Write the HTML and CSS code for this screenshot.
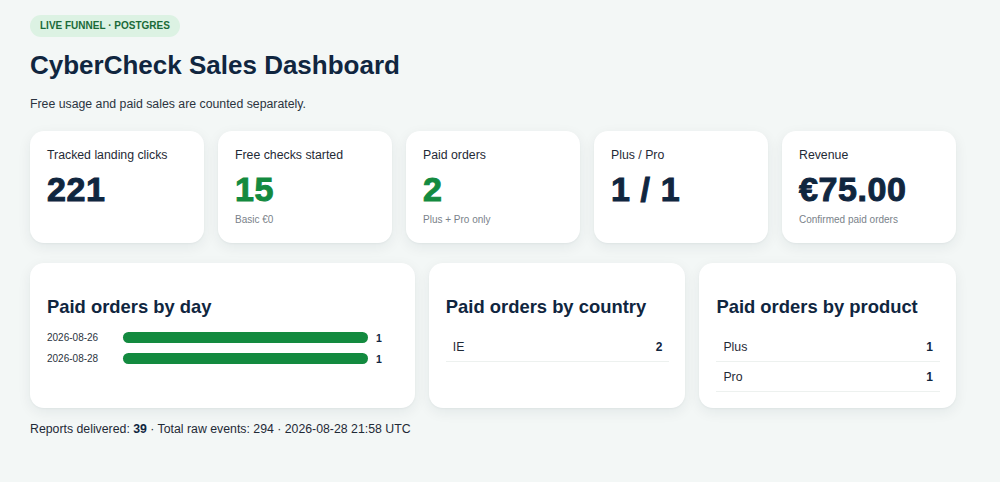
FILE: index.html
```html
<!DOCTYPE html>
<html lang="en">
<head>
<meta charset="utf-8">
<title>CyberCheck Sales Dashboard</title>
<link rel="stylesheet" href="styles.css">
</head>
<body>
<main class="page">
  <header class="head">
    <span class="badge">LIVE FUNNEL · POSTGRES</span>
    <h1 class="title">CyberCheck Sales Dashboard</h1>
    <p class="lead">Free usage and paid sales are counted separately.</p>
  </header>

  <section class="kpis">
    <div class="card kpi">
      <div class="kpi-label">Tracked landing clicks</div>
      <div class="kpi-value">221</div>
    </div>
    <div class="card kpi">
      <div class="kpi-label">Free checks started</div>
      <div class="kpi-value green">15</div>
      <div class="kpi-note">Basic €0</div>
    </div>
    <div class="card kpi">
      <div class="kpi-label">Paid orders</div>
      <div class="kpi-value green">2</div>
      <div class="kpi-note">Plus + Pro only</div>
    </div>
    <div class="card kpi">
      <div class="kpi-label">Plus / Pro</div>
      <div class="kpi-value">1 / 1</div>
    </div>
    <div class="card kpi">
      <div class="kpi-label">Revenue</div>
      <div class="kpi-value">€75.00</div>
      <div class="kpi-note">Confirmed paid orders</div>
    </div>
  </section>

  <section class="panels">
    <div class="card panel">
      <h2 class="panel-title">Paid orders by day</h2>
      <div class="bars">
        <div class="bar-row">
          <span class="bar-date">2026-08-26</span>
          <span class="bar-track"><span class="bar-fill" style="width:100%"></span></span>
          <span class="bar-val">1</span>
        </div>
        <div class="bar-row">
          <span class="bar-date">2026-08-28</span>
          <span class="bar-track"><span class="bar-fill" style="width:100%"></span></span>
          <span class="bar-val">1</span>
        </div>
      </div>
    </div>
    <div class="card panel">
      <h2 class="panel-title">Paid orders by country</h2>
      <div class="rows">
        <div class="row"><span>IE</span><b>2</b></div>
      </div>
    </div>
    <div class="card panel">
      <h2 class="panel-title">Paid orders by product</h2>
      <div class="rows">
        <div class="row"><span>Plus</span><b>1</b></div>
        <div class="row"><span>Pro</span><b>1</b></div>
      </div>
    </div>
  </section>

  <p class="foot">Reports delivered: <b>39</b> · Total raw events: 294 · 2026-08-28 21:58 UTC</p>
</main>
</body>
</html>
```

FILE: styles.css
```css
html, body {
  margin: 0;
  padding: 0;
}
body {
  background: #f3f7f6;
  font-family: "Liberation Sans", Arial, sans-serif;
  color: #14263a;
}
.page {
  width: 926px;
  padding: 15px 0 30px 30px;
  display: flex;
  flex-direction: column;
}
.head {
  display: flex;
  flex-direction: column;
  align-items: flex-start;
}
.badge {
  display: inline-block;
  background: #dcf2e3;
  color: #1a6a38;
  font-size: 10px;
  font-weight: 700;
  letter-spacing: 0;
  line-height: 12px;
  padding: 5px 10px;
  border-radius: 999px;
}
.title {
  margin: 13px 0 0;
  font-size: 26px;
  font-weight: 700;
  color: #10263f;
  line-height: 30px;
}
.lead {
  margin: 16px 0 0;
  font-size: 12.3px;
  color: #2b3440;
  line-height: 16px;
}
.card {
  background: #ffffff;
  border-radius: 14px;
  box-shadow: 0 4px 14px rgba(20, 40, 50, 0.07), 0 1px 2px rgba(20, 40, 50, 0.04);
  box-sizing: border-box;
}
.kpis {
  margin-top: 19px;
  display: grid;
  grid-template-columns: repeat(5, 1fr);
  gap: 14px;
}
.kpi {
  height: 112px;
  padding: 17px 17px 16px;
}
.kpi-label {
  font-size: 12.3px;
  color: #1f2a36;
  line-height: 15px;
}
.kpi-value {
  margin-top: 6px;
  font-size: 34px;
  font-weight: 700;
  letter-spacing: 0.6px;
  -webkit-text-stroke: 1px currentColor;
  color: #10263f;
  line-height: 40px;
}
.kpi-value.green {
  color: #138a3f;
}
.kpi-note {
  margin-top: 5px;
  font-size: 10px;
  color: #7a828a;
  line-height: 12px;
}
.panels {
  margin-top: 20px;
  display: grid;
  grid-template-columns: 1.5fr 1fr 1fr;
  gap: 14px;
}
.panel {
  min-height: 145px;
  padding: 33px 16px 16px 17px;
}
.panel-title {
  margin: 0;
  font-size: 18.4px;
  font-weight: 700;
  color: #10263f;
  line-height: 22px;
}
.bars {
  margin-top: 13px;
  display: flex;
  flex-direction: column;
  gap: 8px;
}
.bar-row {
  display: flex;
  align-items: center;
  height: 13px;
}
.bar-date {
  width: 76px;
  font-size: 10px;
  color: #2b3440;
}
.bar-track {
  width: 245px;
  height: 11px;
  border-radius: 6px;
  background: #e6ece9;
  display: flex;
}
.bar-fill {
  height: 11px;
  border-radius: 6px;
  background: #138a3f;
}
.bar-val {
  margin-left: 8px;
  font-size: 10.5px;
  font-weight: 700;
  color: #10263f;
}
.rows {
  margin-top: 14px;
  display: flex;
  flex-direction: column;
}
.row {
  display: flex;
  justify-content: space-between;
  align-items: center;
  height: 29px;
  padding: 0 7px;
  border-bottom: 1px solid #edf1ef;
  font-size: 12.3px;
  color: #1f2a36;
}
.row b {
  font-size: 12px;
  color: #10263f;
}
.foot {
  margin: 13px 0 0;
  font-size: 12.3px;
  color: #1f2a36;
  line-height: 16px;
}
.foot b {
  color: #10263f;
}
```
